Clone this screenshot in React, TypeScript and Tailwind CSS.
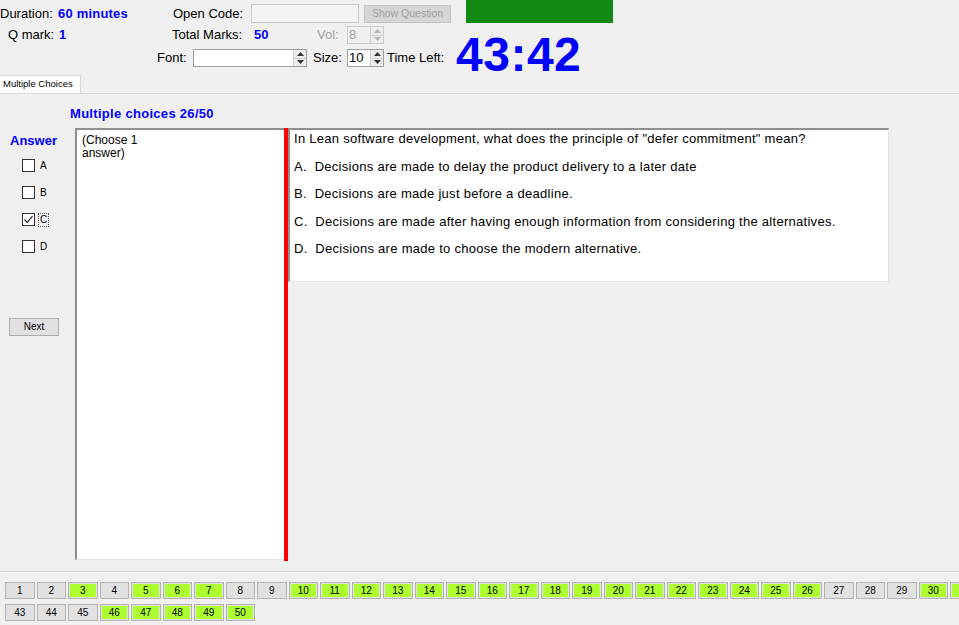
import React from "react";

const GREEN = new Set([3, 5, 6, 7, 10, 11, 12, 13, 14, 15, 16, 17, 18, 19, 20, 21, 22, 23, 24, 25, 26, 30, 31, 46, 47, 48, 49, 50]);

function Arrows({ disabled }: { disabled?: boolean }) {
  const c = disabled ? "#b5b5b5" : "#333333";
  return (
    <div className="flex h-full w-[13px] shrink-0 flex-col border-l border-[#d0d0d0] bg-[#ececec]">
      <div className="flex flex-1 items-center justify-center border-b border-[#d0d0d0]">
        <svg width="7" height="4" viewBox="0 0 7 4">
          <path d="M0 4 L3.5 0 L7 4 Z" fill={c} />
        </svg>
      </div>
      <div className="flex flex-1 items-center justify-center">
        <svg width="7" height="4" viewBox="0 0 7 4">
          <path d="M0 0 L3.5 4 L7 0 Z" fill={c} />
        </svg>
      </div>
    </div>
  );
}

function Spinner({ value, disabled, width }: { value: string; disabled?: boolean; width: string }) {
  return (
    <div
      className={`flex h-[18px] shrink-0 border ${width} ${
        disabled ? "border-[#cccccc] bg-[#f0f0f0] text-[#a0a0a0]" : "border-[#a0a0a0] bg-white text-black"
      }`}
    >
      <div className="flex-1 pl-[1px] text-[13px] leading-[16px]">{value}</div>
      <Arrows disabled={disabled} />
    </div>
  );
}

function CheckRow({ label, checked }: { label: string; checked?: boolean }) {
  return (
    <div className="flex h-[13px] items-center pl-[22px]">
      <div className="flex h-[13px] w-[13px] items-center justify-center border border-[#333333] bg-white">
        {checked ? (
          <svg width="11" height="11" viewBox="0 0 11 11">
            <path d="M1.5 5.5 L4.2 8.3 L9.5 2.2" fill="none" stroke="#222" strokeWidth="1.2" />
          </svg>
        ) : null}
      </div>
      <span
        className={`ml-[3px] px-[1px] text-[10px] leading-[12px] ${
          checked ? "border border-dotted border-[#555]" : "border border-transparent"
        }`}
      >
        {label}
      </span>
    </div>
  );
}

function NumButton({ n }: { n: number }) {
  const green = GREEN.has(n);
  return (
    <div className="h-[17px] w-[29.5px] shrink-0 border border-[#b4b4b4] bg-[#e1e1e1] p-[1px]">
      <div
        className={`flex h-full w-full items-center justify-center text-[10px] leading-none text-black ${
          green ? "bg-[#adff2f]" : "bg-[#e1e1e1]"
        }`}
      >
        {n}
      </div>
    </div>
  );
}

export default function App() {
  // first row runs past the window edge, like the original
  const row1 = Array.from({ length: 31 }, (_, i) => i + 1);
  const row2 = Array.from({ length: 8 }, (_, i) => i + 43);

  return (
    <div className="h-[625px] w-[959px] overflow-hidden bg-[#f0f0f0] font-['Liberation_Sans',Arial,sans-serif] text-[13px] text-black">
      {/* Header */}
      <div className="flex h-[75px]">
        <div className="w-[456px] shrink-0">
          <div className="mt-[4px] flex h-[19px] items-center">
            <span className="w-[58px] shrink-0">Duration:</span>
            <span className="w-[115px] shrink-0 font-bold tracking-[0.2px] text-[#0000ff]">60 minutes</span>
            <span className="w-[78px] shrink-0">Open Code:</span>
            <div className="h-[19px] w-[108px] shrink-0 border border-[#cccccc] bg-[#f4f4f4]" />
            <button
              type="button"
              className="ml-[5px] h-[18px] w-[87px] shrink-0 border border-[#c4c4c4] bg-[#d6d6d6] text-[10.5px] leading-none text-[#a0a0a0]"
            >
              Show Question
            </button>
          </div>
          <div className="mt-[3px] flex h-[18px] items-center pl-[8px]">
            <span className="w-[51px] shrink-0">Q mark:</span>
            <span className="w-[113px] shrink-0 font-bold text-[#0000ff]">1</span>
            <span className="w-[82px] shrink-0">Total Marks:</span>
            <span className="w-[63px] shrink-0 font-bold text-[#0000ff]">50</span>
            <span className="w-[30px] shrink-0 text-[#a0a0a0]">Vol:</span>
            <Spinner value="8" disabled width="w-[37px]" />
          </div>
          <div className="mt-[5px] flex h-[18px] items-center pl-[157px]">
            <span className="w-[36px] shrink-0">Font:</span>
            <div className="flex h-[18px] w-[114px] shrink-0 border border-[#a0a0a0] bg-white">
              <div className="flex-1" />
              <Arrows />
            </div>
            <span className="w-[40px] shrink-0 pl-[6px]">Size:</span>
            <Spinner value="10" width="w-[37px]" />
            <span className="shrink-0 pl-[3px]">Time Left:</span>
          </div>
        </div>
        <div className="shrink-0">
          <div className="ml-[10px] h-[23px] w-[147px] bg-[#108a10]" />
          <div className="mt-[8px] text-[48px] font-bold leading-[48px] tracking-[0.5px] text-[#0000ff]">43:42</div>
        </div>
      </div>

      {/* Tab strip */}
      <div className="flex h-[19px] items-end border-b border-[#d9d9d9]">
        <div className="flex h-[18px] w-[81px] items-center border-r border-t border-[#d9d9d9] bg-white pl-[3px] text-[9.5px]">
          Multiple Choices
        </div>
      </div>

      {/* Tab page */}
      <div className="h-[478px] border-b border-[#d4d4d4]">
        <div className="h-[34px] pl-[70px] pt-[12px] text-[13px] font-bold leading-[16px] tracking-[0.3px] text-[#0000ff]">
          Multiple choices 26/50
        </div>
        <div className="flex">
          <div className="w-[75px] shrink-0">
            <div className="mt-[5px] pl-[10px] text-[13px] font-bold leading-[16px] text-[#0000ff]">Answer</div>
            <div className="mt-[10px] flex flex-col gap-[14px]">
              <CheckRow label="A" />
              <CheckRow label="B" />
              <CheckRow label="C" checked />
              <CheckRow label="D" />
            </div>
            <button
              type="button"
              className="ml-[9px] mt-[65px] h-[18px] w-[50px] border border-[#adadad] bg-[#e1e1e1] text-[10px] leading-none"
            >
              Next
            </button>
          </div>
          <div className="h-[432px] w-[209px] shrink-0 border-l-2 border-t-2 border-b border-[#909090] border-b-[#e3e3e3] bg-white pl-[5px] pt-[4px] text-[12px] leading-[13px]">
            (Choose 1
            <br />
            answer)
          </div>
          <div className="h-[433px] w-[4px] shrink-0 bg-[#ff0000]" />
          <div className="flex h-[154px] w-[601px] shrink-0 flex-col gap-[12.5px] border-l-2 border-t-2 border-r border-b border-[#909090] border-r-[#e3e3e3] border-b-[#e3e3e3] bg-white pl-[4px] pt-[1px] text-[13px] leading-[15px] tracking-[0.28px]">
            <p className="whitespace-pre">In Lean software development, what does the principle of "defer commitment" mean?</p>
            <p className="whitespace-pre">A.  Decisions are made to delay the product delivery to a later date</p>
            <p className="whitespace-pre">B.  Decisions are made just before a deadline.</p>
            <p className="whitespace-pre">C.  Decisions are made after having enough information from considering the alternatives.</p>
            <p className="whitespace-pre">D.  Decisions are made to choose the modern alternative.</p>
          </div>
        </div>
      </div>

      {/* Question navigator */}
      <div className="flex flex-col gap-[5px] overflow-hidden border-t border-white pl-[5px] pt-[9px]">
        <div className="flex gap-[2px]">
          {row1.map((n) => (
            <NumButton key={n} n={n} />
          ))}
        </div>
        <div className="flex gap-[2px]">
          {row2.map((n) => (
            <NumButton key={n} n={n} />
          ))}
        </div>
      </div>
    </div>
  );
}
